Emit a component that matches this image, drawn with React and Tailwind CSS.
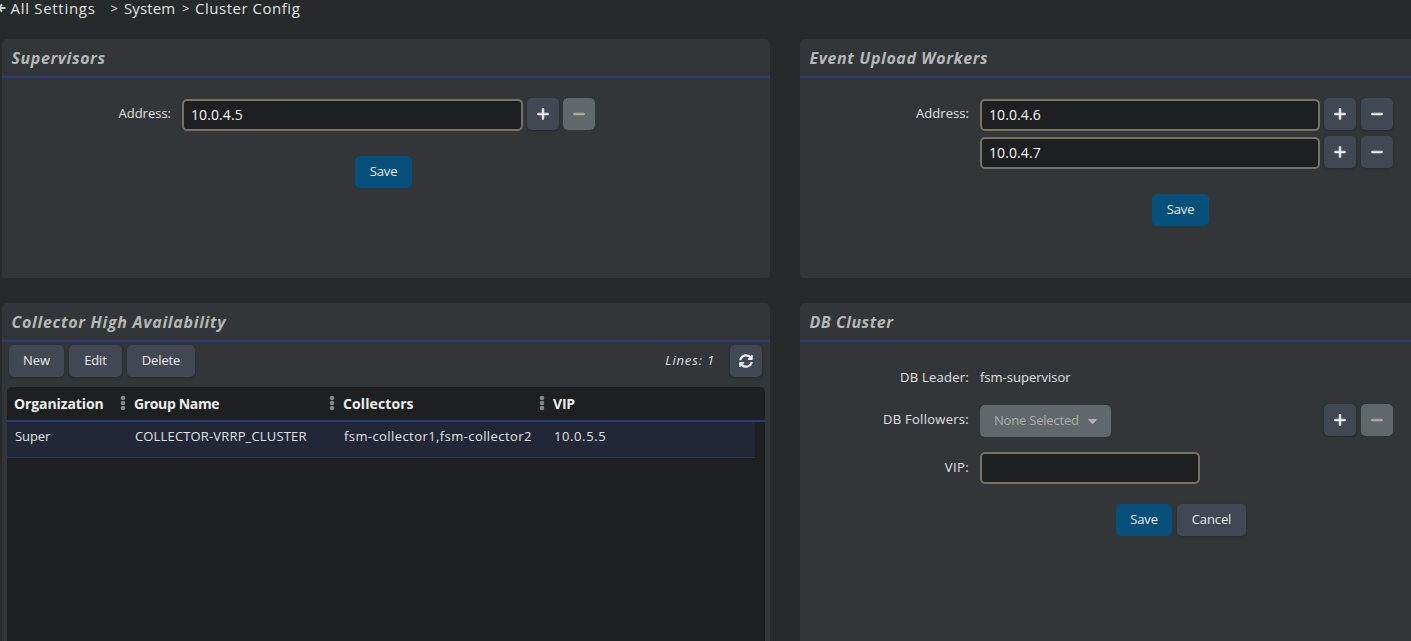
import React, { useState } from "react";
import clsx from "clsx";
import { FaPlus, FaMinus } from "react-icons/fa6";
import { FaSyncAlt } from "react-icons/fa";

const columns = [
  { key: "organization", label: "Organization", head: "tracking-[-0.1px]", cell: "tracking-[-0.1px]" },
  { key: "group", label: "Group Name", head: "tracking-[-0.35px]", cell: "tracking-[0.16px]" },
  { key: "collectors", label: "Collectors", head: "tracking-[0.1px]", cell: "tracking-[0.42px]" },
  { key: "vip", label: "VIP", head: "tracking-[-0.2px]", cell: "tracking-[0.6px]" },
];

const groups = [
  {
    organization: "Super",
    group: "COLLECTOR-VRRP_CLUSTER",
    collectors: "fsm-collector1,fsm-collector2",
    vip: "10.0.5.5",
  },
];

const tableGrid = "grid grid-cols-[120px_209px_210px_1fr]";

function Panel({ title, titleClass, children }) {
  return (
    <section className="flex flex-col overflow-hidden rounded-t-[5px] rounded-b-[4px] bg-[#323638]">
      <h2 className="h-[39px] shrink-0 border-b-2 border-[#2e3b79] pl-[9.5px] text-[16px] leading-[39px] font-bold text-[#b5b6b6] italic">
        <span className={titleClass}>{title}</span>
      </h2>
      {children}
    </section>
  );
}

function Button({ children, className, primary }) {
  return (
    <button
      className={clsx(
        "flex h-8 shrink-0 items-center justify-center rounded-[5px] pb-px text-[13px] tracking-[-0.1px] text-[#e8e8e8]",
        primary ? "bg-[#08507c]" : "bg-[#424754] shadow-[0_1px_3px_rgba(0,0,0,0.25)]",
        className
      )}
    >
      {children}
    </button>
  );
}

function IconButton({ icon: Icon, label, disabled, onClick, iconClass }) {
  return (
    <button
      aria-label={label}
      disabled={disabled}
      onClick={onClick}
      className={clsx(
        "flex size-8 shrink-0 items-center justify-center rounded-[5px]",
        disabled
          ? "bg-[#60686c] text-[#b3aca6]"
          : "bg-[#424754] text-[#ececec] shadow-[0_1px_3px_rgba(0,0,0,0.25)]"
      )}
    >
      <Icon className={iconClass || "size-[14px] stroke-current [stroke-width:24]"} />
    </button>
  );
}

function Field({ label, labelClass, children, className }) {
  return (
    <div className={clsx("flex", className)}>
      <div className="mr-[11px] w-[169px] shrink-0 text-right text-[13px] leading-[30px] text-[#e2e2e2]">
        <span className={labelClass}>{label}</span>
      </div>
      {children}
    </div>
  );
}

function AddressList({ initial, gap, inputClass }) {
  const [addresses, setAddresses] = useState(initial);

  const update = (index, value) =>
    setAddresses((prev) => prev.map((item, i) => (i === index ? value : item)));
  const add = (index) =>
    setAddresses((prev) => [...prev.slice(0, index + 1), "", ...prev.slice(index + 1)]);
  const remove = (index) => setAddresses((prev) => prev.filter((_, i) => i !== index));

  return (
    <div className="flex flex-col gap-[5px]">
      {addresses.map((address, index) => (
        <div key={index} className="flex">
          <input
            value={address}
            onChange={(e) => update(index, e.target.value)}
            className={clsx(
              "mt-px mr-1 h-8 rounded-[5px] border-2 border-[#797166] bg-[#1e1f21] px-[7px] pb-[2px] text-[14px] tracking-[0.1px] text-[#f8f8f8] outline-none",
              inputClass
            )}
          />
          <div className={clsx("flex", gap)}>
            <IconButton icon={FaPlus} label="Add" onClick={() => add(index)} />
            <IconButton
              icon={FaMinus}
              label="Remove"
              disabled={addresses.length === 1}
              onClick={() => remove(index)}
            />
          </div>
        </div>
      ))}
    </div>
  );
}

function DragDots() {
  return (
    <svg width="6" height="16" viewBox="0 0 6 16" fill="#858585">
      <circle cx="3" cy="3" r="2.3" />
      <circle cx="3" cy="8" r="2.3" />
      <circle cx="3" cy="13" r="2.3" />
    </svg>
  );
}

function CollectorTable() {
  return (
    <div className="mx-[5px] mt-[10px] flex-1 overflow-hidden rounded-t-[5px] bg-[#1e1f21]">
      <div className={clsx(tableGrid, "h-[35px] border-b-2 border-[#2e3b79] text-[14px] font-bold text-[#ececec]")}>
        {columns.map((col, i) => (
          <div key={col.key} className="flex h-8 items-center justify-between pr-px pl-[7px]">
            <span className={clsx("whitespace-nowrap", col.head)}>{col.label}</span>
            {i < columns.length - 1 && <DragDots />}
          </div>
        ))}
      </div>
      {groups.map((row) => (
        <div
          key={row.group}
          className={clsx(tableGrid, "mr-[10px] h-9 border-b border-[#2a3352] bg-[#212737] text-[13px] leading-[29px] text-[#e2e2e2]")}
        >
          {columns.map((col) => (
            <div key={col.key} className="pl-2 whitespace-nowrap">
              <span className={col.cell}>{row[col.key]}</span>
            </div>
          ))}
        </div>
      ))}
    </div>
  );
}

export default function App() {
  return (
    <div className="h-[641px] w-[1411px] overflow-hidden bg-[#262a2b] font-['Open_Sans',sans-serif] font-medium">
      <header className="flex h-[39px] items-start text-[15px] leading-[17px] text-[#e2e2e2]">
        <svg className="mt-[2px] h-3 w-[6px] shrink-0" viewBox="0 0 6 12" fill="none" stroke="#cfcfcf" strokeWidth="2">
          <path d="M0 6h5.5M2 2.5L-1.5 6L2 9.5" />
        </svg>
        <span className="ml-[4.5px] w-[100px] tracking-[0.7px]">All Settings</span>
        <span className="w-[13.5px] text-[13px]">&gt;</span>
        <span className="w-[58px] tracking-[0.1px]">System</span>
        <span className="w-[13px] text-[13px]">&gt;</span>
        <span className="tracking-[0.52px]">Cluster Config</span>
      </header>

      <main className="ml-[2px] grid h-[800px] w-[1566px] grid-cols-[768px_768px] grid-rows-[239px_1fr] gap-x-[30px] gap-y-[25px]">
        <Panel title="Supervisors" titleClass="tracking-[0.6px]">
          <Field label="Address:" className="mt-5">
            <AddressList initial={["10.0.4.5"]} gap="gap-1" inputClass="w-[341px]" />
          </Field>
          <Button primary className="mt-[25px] ml-[353px] w-[57px]">Save</Button>
        </Panel>

        <Panel title="Event Upload Workers" titleClass="tracking-[0.6px]">
          <Field label="Address:" labelClass="tracking-[0.05px]" className="mt-5">
            <AddressList initial={["10.0.4.6", "10.0.4.7"]} gap="gap-[5px]" inputClass="w-[340px]" />
          </Field>
          <Button primary className="mt-[25px] ml-[352px] w-[57px]">Save</Button>
        </Panel>

        <Panel title="Collector High Availability" titleClass="tracking-[0.7px]">
          <div className="mt-[3px] flex items-center gap-[5px] pr-2 pl-[7px]">
            <Button className="w-[55px]">New</Button>
            <Button className="w-[53px]">Edit</Button>
            <Button className="w-[68px]">Delete</Button>
            <span className="mr-[10px] ml-auto text-[13px] tracking-[0.85px] text-[#dddddd] italic">Lines: 1</span>
            <IconButton icon={FaSyncAlt} label="Refresh" iconClass="mr-px size-[14px]" />
          </div>
          <CollectorTable />
        </Panel>

        <Panel title="DB Cluster" titleClass="tracking-[0.5px]">
          <Field label="DB Leader:" labelClass="tracking-[0.25px]" className="mt-5">
            <span className="text-[13px] leading-[30px] text-[#e2e2e2]">fsm-supervisor</span>
          </Field>
          <Field label="DB Followers:" labelClass="tracking-[0.28px]" className="mt-3">
            <button
              disabled
              className="mt-px flex h-8 w-[131px] items-center rounded-[5px] bg-[#60686c] pl-[14px] text-[13px] tracking-[-0.2px] text-[#b3aca6]"
            >
              None Selected
              <svg className="mr-[14px] ml-auto h-[5px] w-[9px]" viewBox="0 0 9 5" fill="currentColor">
                <path d="M0.6 0h7.8q0.8 0.3 0.2 1L5 4.7q-0.5 0.5-1 0L0.4 1Q-0.2 0.3 0.6 0z" />
              </svg>
            </button>
            <div className="ml-[213px] flex gap-[5px]">
              <IconButton icon={FaPlus} label="Add follower" />
              <IconButton icon={FaMinus} label="Remove follower" disabled />
            </div>
          </Field>
          <Field label="VIP:" labelClass="tracking-[0.4px]" className="mt-[15px]">
            <input className="h-8 w-[220px] rounded-[5px] border-2 border-[#797166] bg-[#1e1f21] px-[7px] text-[14px] text-[#f4f4f4] outline-none" />
          </Field>
          <div className="mt-5 ml-[316px] flex gap-[5px]">
            <Button primary className="w-14">Save</Button>
            <Button className="w-[69px]">Cancel</Button>
          </div>
        </Panel>
      </main>
    </div>
  );
}
